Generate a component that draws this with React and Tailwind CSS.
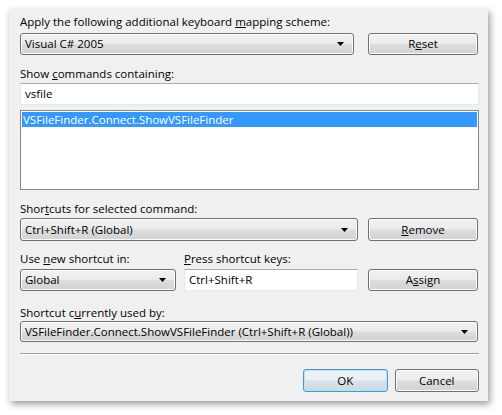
import React from "react";

const font = { fontFamily: '"Open Sans", "Noto Sans", sans-serif' };

function Arrow() {
  return (
    <svg width="7" height="4" viewBox="0 0 7 4" className="shrink-0">
      <path d="M0 0 H7 L3.5 4 Z" fill="#000" />
    </svg>
  );
}

function Combo({ className, children }) {
  return (
    <div
      className={
        "flex items-center justify-between border border-[#707070] rounded-[3px] bg-[linear-gradient(#f2f2f2_0%,#ebebeb_48%,#dddddd_52%,#d2d2d2_100%)] shadow-[inset_0_0_0_1px_#fcfcfc] pl-[4px] pr-[9px] " +
        className
      }
    >
      <span className="whitespace-nowrap">{children}</span>
      <Arrow />
    </div>
  );
}

function Button({ className, children, def }) {
  return (
    <div
      className={
        "flex items-center justify-center rounded-[3px] border " +
        (def
          ? "border-[#3d9bd8] bg-[linear-gradient(#f1f4f7_0%,#e8eef2_48%,#d9e2e8_52%,#cfd9e0_100%)] shadow-[inset_0_0_0_1px_#b8e2f8] "
          : "border-[#707070] bg-[linear-gradient(#f2f2f2_0%,#ebebeb_48%,#dddddd_52%,#d2d2d2_100%)] shadow-[inset_0_0_0_1px_#fcfcfc] ") +
        className
      }
    >
      {children}
    </div>
  );
}

function TextBox({ className, children }) {
  return (
    <div
      className={
        "flex items-center bg-white border border-[#e3e9ef] border-t-[#abadb3] pl-[4px] " + className
      }
    >
      {children}
    </div>
  );
}

function Label({ className = "", children }) {
  return <div className={"h-[15px] leading-[15px] whitespace-nowrap " + className}>{children}</div>;
}

export default function App() {
  return (
    <div className="w-[502px] h-[415px] bg-white pt-[9px] pl-[9px] text-[11.5px] text-black" style={font}>
      <div className="w-[479px] h-[392px] bg-[#f0f0f0] shadow-[2px_3px_7px_rgba(0,0,0,0.4)] pt-[5px] pl-[11px] pr-[9px] flex flex-col">
        <Label>
          Apply the following additional keyboard <u>m</u>apping scheme:
        </Label>
        <div className="mt-[4px] flex gap-[14px] h-[22px]">
          <Combo className="w-[334px] h-[22px]">Visual C# 2005</Combo>
          <Button className="w-[110px] h-[22px]">
            R<u>e</u>set
          </Button>
        </div>
        <Label className="mt-[11px]">
          Show <u>c</u>ommands containing:
        </Label>
        <TextBox className="mt-[2px] w-[459px] h-[22px]">vsfile</TextBox>
        <div className="mt-[5px] w-[459px] h-[80px] bg-white border border-[#828790] p-[1px]">
          <div className="h-[15px] leading-[15px] bg-[#3399ff] text-white pl-[1px] whitespace-nowrap">
            VSFileFinder.Connect.ShowVSFileFinder
          </div>
        </div>
        <Label className="mt-[11px]">
          Shor<u>t</u>cuts for selected command:
        </Label>
        <div className="mt-[2px] flex gap-[10px] h-[23px]">
          <Combo className="w-[338px] h-[23px]">Ctrl+Shift+R (Global)</Combo>
          <Button className="w-[110px] h-[23px]">
            <u>R</u>emove
          </Button>
        </div>
        <div className="mt-[10px] flex">
          <Label className="w-[164px]">
            Use <u>n</u>ew shortcut in:
          </Label>
          <Label>
            <u>P</u>ress shortcut keys:
          </Label>
        </div>
        <div className="mt-[3px] flex h-[22px]">
          <Combo className="w-[156px] h-[22px]">Global</Combo>
          <TextBox className="ml-[8px] w-[174px] h-[22px]">Ctrl+Shift+R</TextBox>
          <Button className="ml-[10px] w-[110px] h-[22px]">
            A<u>s</u>sign
          </Button>
        </div>
        <Label className="mt-[14px]">
          Shortcut c<u>u</u>rrently used by:
        </Label>
        <Combo className="mt-[1px] w-[458px] h-[21px]">
          VSFileFinder.Connect.ShowVSFileFinder (Ctrl+Shift+R (Global))
        </Combo>
        <div className="mt-[11px] w-[459px] h-[2px] border-t border-[#a0a0a0] border-b border-b-white" />
        <div className="mt-[14px] flex h-[23px] pl-[283px] gap-[7px]">
          <Button def className="w-[85px] h-[23px]">
            OK
          </Button>
          <Button className="w-[85px] h-[23px]">Cancel</Button>
        </div>
      </div>
    </div>
  );
}
